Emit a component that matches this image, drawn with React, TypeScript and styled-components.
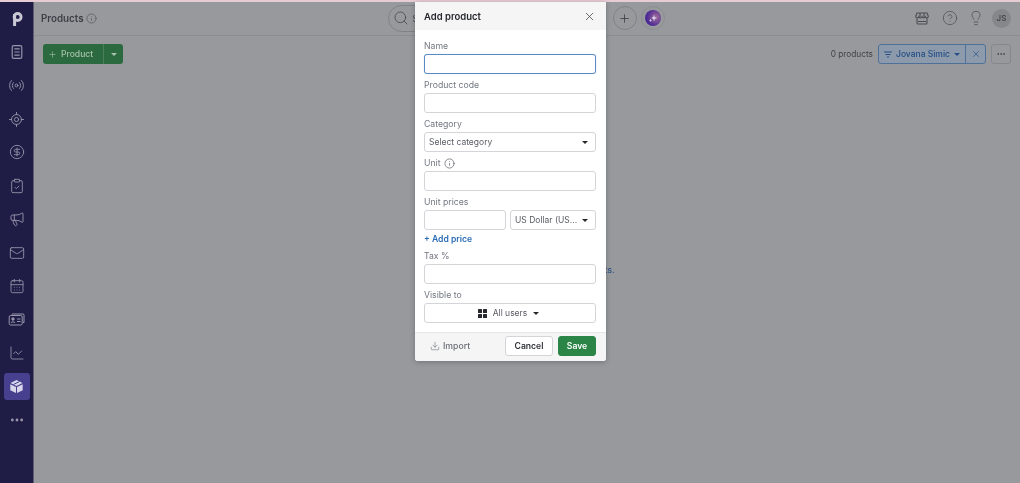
import * as React from "react";
import styled, { createGlobalStyle } from "styled-components";
import {
  Radio,
  LocateFixed,
  CircleDollarSign,
  ClipboardCheck,
  Megaphone,
  Mail,
  CalendarDays,
  ChartLine,
  Ellipsis,
  Plus,
  X,
  Info,
  Search,
  CircleHelp,
  Lightbulb,
  Download,
} from "lucide-react";

const GlobalStyle = createGlobalStyle`
  html, body {
    margin: 0;
    height: 100%;
    overflow: hidden;
  }
  body {
    font-family: Inter, "Liberation Sans", sans-serif;
    -webkit-font-smoothing: antialiased;
  }
  * {
    box-sizing: border-box;
  }
`;

const Page = styled.div`
  position: relative;
  width: 1020px;
  height: 483px;
  display: flex;
  flex-direction: column;
  background: #97999c;
  overflow: hidden;
  filter: blur(0.35px);
`;

const TopStrip = styled.div`
  height: 2px;
  flex: none;
  background: #e8ccd4;
`;

const Body = styled.div`
  flex: 1;
  display: flex;
  min-height: 0;
`;

const Sidebar = styled.nav`
  width: 34px;
  flex: none;
  display: flex;
  flex-direction: column;
  align-items: center;
  background: #1f1d45;
  border-right: 1px solid #5d5e73;
`;

const NavItem = styled.div`
  width: 26px;
  height: 33.45px;
  flex: none;
  display: flex;
  align-items: center;
  justify-content: center;
`;

const NavChip = styled.div<{ $active?: boolean }>`
  width: 26px;
  height: 27px;
  display: flex;
  align-items: center;
  justify-content: center;
  color: ${(p) => (p.$active ? "#d8d6ea" : "#9796ab")};
  background: ${(p) => (p.$active ? "#46408f" : "transparent")};
  border-radius: 3px;
`;

const Main = styled.main`
  flex: 1;
  min-width: 0;
  display: flex;
  flex-direction: column;
`;

const TopBar = styled.header`
  height: 34px;
  flex: none;
  display: flex;
  align-items: center;
  padding: 0 9px 1px 7px;
  border-bottom: 1px solid #8b8d91;
`;

const PageTitle = styled.h1`
  margin: 0;
  display: flex;
  align-items: center;
  gap: 2px;
  font-size: 9.8px;
  font-weight: 600;
  color: #3c3f46;
`;

const GreyIcon = styled.span`
  display: inline-flex;
  color: #4e5158;
`;

const SearchBox = styled.div`
  width: 218px;
  height: 27px;
  margin-left: 291px;
  flex: none;
  display: flex;
  align-items: center;
  gap: 4px;
  padding-left: 4px;
  border: 1px solid #808287;
  border-radius: 14px;
  color: #45484f;
  font-size: 9px;
`;

const RoundButton = styled.div`
  width: 24px;
  height: 24px;
  margin-left: 7px;
  flex: none;
  display: flex;
  align-items: center;
  justify-content: center;
  border: 1px solid #808287;
  border-radius: 50%;
  color: #35383f;
`;

const SparkRing = styled.div`
  width: 24px;
  height: 24px;
  margin-left: 4px;
  flex: none;
  display: flex;
  align-items: center;
  justify-content: center;
  border: 1px solid #8b8d91;
  border-radius: 50%;
`;

const SparkDot = styled.div`
  width: 16px;
  height: 16px;
  display: flex;
  align-items: center;
  justify-content: center;
  border-radius: 50%;
  background: radial-gradient(circle at 70% 45%, #a06a9a, #4c2a94 65%);
`;

const TopActions = styled.div`
  margin-left: auto;
  display: flex;
  align-items: center;
  gap: 10px;
  color: #4b4e55;
`;

const Avatar = styled.div`
  width: 19px;
  height: 19px;
  margin-left: -2px;
  display: flex;
  align-items: center;
  justify-content: center;
  border-radius: 50%;
  background: #85878b;
  font-size: 8px;
  font-weight: 500;
  color: #3f4249;
`;

const ToolBar = styled.div`
  flex: none;
  display: flex;
  align-items: center;
  padding: 8px 9px 0 9px;
`;

const SplitButton = styled.div`
  display: flex;
  height: 20px;
  border-radius: 3px;
  overflow: hidden;
  background: #2b6a3f;
  color: #a9c1ae;
  font-size: 8.6px;
  font-weight: 500;
`;

const SplitMain = styled.div`
  width: 61px;
  display: flex;
  align-items: center;
  gap: 4px;
  padding-left: 5px;
  border-right: 1px solid #4b7e5a;
`;

const SplitCaret = styled.div`
  width: 19px;
  display: flex;
  align-items: center;
  justify-content: center;
`;

const Caret = styled.span<{ $color?: string }>`
  width: 0;
  height: 0;
  flex: none;
  border-left: 3.5px solid transparent;
  border-right: 3.5px solid transparent;
  border-top: 3.5px solid ${(p) => p.$color || "#26282d"};
`;

const ToolRight = styled.div`
  margin-left: auto;
  display: flex;
  align-items: center;
`;

const CountText = styled.span`
  margin-right: 5px;
  font-size: 8.3px;
  color: #3f4249;
`;

const FilterGroup = styled.div`
  display: flex;
  height: 20px;
  border: 1px solid #4f7199;
  border-radius: 3px;
  background: #8c9aab;
  color: #254f86;
  font-size: 8.5px;
  font-weight: 500;
`;

const FilterLabel = styled.div`
  width: 87px;
  display: flex;
  align-items: center;
  gap: 4px;
  padding-left: 5px;
  border-right: 1px solid #4f7199;
  white-space: nowrap;
`;

const FilterClose = styled.div`
  width: 19px;
  display: flex;
  align-items: center;
  justify-content: center;
`;

const MoreButton = styled.div`
  width: 20px;
  height: 20px;
  margin-left: 5px;
  display: flex;
  align-items: center;
  justify-content: center;
  border: 1px solid #85878b;
  border-radius: 3px;
  color: #3f4249;
`;

const EmptyArea = styled.div`
  flex: 1;
  display: flex;
  justify-content: center;
  padding: 200px 0 0 0;
`;

const EmptyLink = styled.span`
  font-size: 8.5px;
  font-weight: 500;
  line-height: 12px;
  color: #2f5687;
  white-space: nowrap;
`;

const Modal = styled.section`
  position: absolute;
  left: 415px;
  top: 2px;
  width: 191px;
  display: flex;
  flex-direction: column;
  background: #fff;
  border-radius: 0 0 3px 3px;
  box-shadow: 0 1px 5px rgba(40, 42, 48, 0.35);
`;

const ModalHeader = styled.div`
  height: 28px;
  display: flex;
  align-items: center;
  justify-content: space-between;
  padding: 0 10px 0 9px;
  background: #f5f5f5;
`;

const ModalTitle = styled.h2`
  margin: 0;
  font-size: 9.5px;
  font-weight: 600;
  color: #25272c;
`;

const Form = styled.div`
  display: flex;
  flex-direction: column;
  gap: 4px;
  padding: 9px 10px 9px 9px;
`;

const Field = styled.div``;

const Label = styled.label`
  display: flex;
  align-items: center;
  gap: 3px;
  height: 12px;
  padding-top: 2px;
  margin-bottom: 3px;
  font-size: 8.7px;
  color: #737680;
`;

const Input = styled.div<{ $focus?: boolean }>`
  height: 20px;
  border: 1px solid ${(p) => (p.$focus ? "#5a8ac4" : "#d3d5d9")};
  border-radius: 3px;
  background: #fff;
  ${(p) => p.$focus && "box-shadow: 0 0 1px #a9c5e6;"}
`;

const Select = styled.div<{ $center?: boolean }>`
  height: 20px;
  display: flex;
  align-items: center;
  justify-content: ${(p) => (p.$center ? "center" : "space-between")};
  gap: ${(p) => (p.$center ? "6px" : "0")};
  padding: 0 7px 0 4px;
  border: 1px solid #d3d5d9;
  border-radius: 3px;
  font-size: 8.5px;
  color: #5a5d64;
  white-space: nowrap;
`;

const PriceRow = styled.div`
  display: grid;
  grid-template-columns: 82px 86px;
  gap: 4px;
`;

const AddPrice = styled.div`
  height: 12px;
  margin: 3px 0 0 0;
  font-size: 8.6px;
  line-height: 12px;
  font-weight: 600;
  color: #2a6cb5;
`;

const GridGlyph = styled.span`
  width: 9px;
  height: 9px;
  display: grid;
  grid-template-columns: 4px 4px;
  grid-template-rows: 4px 4px;
  gap: 1px;
  color: #26282d;
`;

const GridCell = styled.i`
  display: block;
  background: currentColor;
  border-radius: 0.5px;
`;

const ModalFooter = styled.div`
  height: 29px;
  display: flex;
  align-items: center;
  padding: 0 10px 2px 15px;
  border-top: 1px solid #e6e7e9;
  background: #f5f5f5;
  border-radius: 0 0 3px 3px;
`;

const ImportLink = styled.div`
  display: flex;
  align-items: center;
  gap: 3px;
  margin-right: auto;
  font-size: 8.7px;
  font-weight: 500;
  color: #6b6e75;
`;

const FooterButton = styled.button<{ $primary?: boolean }>`
  height: 20px;
  padding: 0;
  width: ${(p) => (p.$primary ? "38px" : "48px")};
  margin-left: ${(p) => (p.$primary ? "5px" : "0")};
  border: 1px solid ${(p) => (p.$primary ? "#2a8546" : "#d3d5d9")};
  border-radius: 3px;
  background: ${(p) => (p.$primary ? "#2a8546" : "#fff")};
  color: ${(p) => (p.$primary ? "#fff" : "#2f3137")};
  font-family: inherit;
  font-size: 8.6px;
  font-weight: 600;
`;

const PipeLogo = () => (
  <svg width="14" height="16" viewBox="0 0 14 16" fill="none" stroke="#c9c9d6">
    <circle cx="7.6" cy="6" r="3.5" strokeWidth="2.8" />
    <path d="M4.6 3v12" strokeWidth="3" />
  </svg>
);

const DealsIcon = () => (
  <svg width="16" height="16" viewBox="0 0 15 15" fill="none" stroke="currentColor" strokeWidth="1.1">
    <rect x="3" y="1.5" width="9" height="12" rx="1.5" />
    <path d="M5 4.5h5M5 7.5h5M5 10.5h5" />
  </svg>
);

const ContactsIcon = () => (
  <svg width="17" height="15" viewBox="0 0 17 15" fill="none" stroke="currentColor" strokeWidth="1">
    <path d="M4 2.5V2h11a1 1 0 0 1 1 1v7.5h-1" />
    <rect x="1.2" y="3.5" width="13" height="9.5" rx="1.5" />
    <circle cx="5" cy="7" r="1.2" fill="currentColor" />
    <path d="M3 11c.4-1.6 3.6-1.6 4 0M9 7h3.5M9 9.5h3.5" />
  </svg>
);

const BoxIcon = () => (
  <svg width="15" height="15" viewBox="0 0 15 15">
    <path d="M7.5 1 13.5 4 7.5 7 1.5 4Z" fill="currentColor" />
    <path d="M1.3 5.2 7 8v6L1.3 11.2ZM13.7 5.2 8 8v6l5.7-2.8Z" fill="currentColor" />
    <path d="M4.5 5.5 10.5 2.5" stroke="#46408f" strokeWidth="1" />
  </svg>
);

const StoreIcon = () => (
  <svg width="14" height="13" viewBox="0 0 14 13" fill="none" stroke="currentColor" strokeWidth="1.1" style={{ marginRight: 3 }}>
    <path d="M2 1h10l1.3 3.2a1.6 1.6 0 0 1-3.1.6 1.7 1.7 0 0 1-3.2 0 1.7 1.7 0 0 1-3.2 0 1.6 1.6 0 0 1-3.1-.6Z" />
    <path d="M5 1v4M9 1v4M2 6.2V11a1 1 0 0 0 1 1h8a1 1 0 0 0 1-1V6.2M3 9.5h8" />
  </svg>
);

const navIcons = [
  <DealsIcon key="deals" />,
  <Radio key="leads" size={17} strokeWidth={1.3} />,
  <LocateFixed key="target" size={17} strokeWidth={1.3} />,
  <CircleDollarSign key="money" size={16} strokeWidth={1.3} />,
  <ClipboardCheck key="tasks" size={16} strokeWidth={1.3} />,
  <Megaphone key="campaign" size={16} strokeWidth={1.4} />,
  <Mail key="mail" size={16} strokeWidth={1.3} />,
  <CalendarDays key="calendar" size={16} strokeWidth={1.3} />,
  <ContactsIcon key="contacts" />,
  <ChartLine key="chart" size={16} strokeWidth={1.3} />,
];

const App: React.FC = () => {
  return (
    <Page>
      <GlobalStyle />
      <TopStrip />
      <Body>
        <Sidebar>
          <NavItem>
            <NavChip>
              <PipeLogo />
            </NavChip>
          </NavItem>
          {navIcons.map((icon, index) => (
            <NavItem key={index}>
              <NavChip>{icon}</NavChip>
            </NavItem>
          ))}
          <NavItem>
            <NavChip $active>
              <BoxIcon />
            </NavChip>
          </NavItem>
          <NavItem>
            <NavChip>
              <Ellipsis size={16} strokeWidth={2.2} />
            </NavChip>
          </NavItem>
        </Sidebar>
        <Main>
          <TopBar>
            <PageTitle>
              Products
              <GreyIcon>
                <Info size={11} strokeWidth={1.4} />
              </GreyIcon>
            </PageTitle>
            <SearchBox>
              <Search size={16} strokeWidth={1.2} />S
            </SearchBox>
            <RoundButton>
              <Plus size={13} strokeWidth={1.4} />
            </RoundButton>
            <SparkRing>
              <SparkDot>
                <svg width="8" height="8" viewBox="0 0 8 8" fill="#d6cbe4">
                  <path d="M5 0.5 5.8 3 8 4 5.8 5 5 7.5 4.2 5 2 4 4.2 3Z" />
                  <path d="M1.5 4.5 2 6 3.2 6.5 2 7 1.5 8 1 7 0 6.5 1 6Z" />
                </svg>
              </SparkDot>
            </SparkRing>
            <TopActions>
              <StoreIcon />
              <CircleHelp size={16} strokeWidth={1.1} />
              <Lightbulb size={16} strokeWidth={1.2} />
              <Avatar>JS</Avatar>
            </TopActions>
          </TopBar>
          <ToolBar>
            <SplitButton>
              <SplitMain>
                <Plus size={9} strokeWidth={1.6} />
                Product
              </SplitMain>
              <SplitCaret>
                <Caret $color="#a9c1ae" />
              </SplitCaret>
            </SplitButton>
            <ToolRight>
              <CountText>0 products</CountText>
              <FilterGroup>
                <FilterLabel>
                  <svg width="8" height="7" viewBox="0 0 8 7" stroke="currentColor" strokeWidth="1">
                    <path d="M0 1h8M1.5 3.5h5M3 6h2" />
                  </svg>
                  Jovana Simic
                  <Caret $color="#254f86" />
                </FilterLabel>
                <FilterClose>
                  <X size={10} strokeWidth={1.6} />
                </FilterClose>
              </FilterGroup>
              <MoreButton>
                <Ellipsis size={10} strokeWidth={2} />
              </MoreButton>
            </ToolRight>
          </ToolBar>
          <EmptyArea>
            <EmptyLink>Add new products or import your products.</EmptyLink>
          </EmptyArea>
        </Main>
      </Body>

      <Modal>
        <ModalHeader>
          <ModalTitle>Add product</ModalTitle>
          <X size={13} strokeWidth={1.5} color="#4a4d54" />
        </ModalHeader>
        <Form>
          <Field>
            <Label>Name</Label>
            <Input $focus />
          </Field>
          <Field>
            <Label>Product code</Label>
            <Input />
          </Field>
          <Field>
            <Label>Category</Label>
            <Select>
              Select category
              <Caret />
            </Select>
          </Field>
          <Field>
            <Label>
              Unit
              <Info size={11} strokeWidth={1.4} color="#4a4d54" />
            </Label>
            <Input />
          </Field>
          <Field>
            <Label>Unit prices</Label>
            <PriceRow>
              <Input />
              <Select>
                US Dollar (US...
                <Caret />
              </Select>
            </PriceRow>
            <AddPrice>+ Add price</AddPrice>
          </Field>
          <Field>
            <Label>Tax %</Label>
            <Input />
          </Field>
          <Field>
            <Label>Visible to</Label>
            <Select $center>
              <GridGlyph>
                <GridCell />
                <GridCell />
                <GridCell />
                <GridCell />
              </GridGlyph>
              All users
              <Caret />
            </Select>
          </Field>
        </Form>
        <ModalFooter>
          <ImportLink>
            <Download size={10} strokeWidth={1.4} />
            Import
          </ImportLink>
          <FooterButton>Cancel</FooterButton>
          <FooterButton $primary>Save</FooterButton>
        </ModalFooter>
      </Modal>
    </Page>
  );
};

export default App;
